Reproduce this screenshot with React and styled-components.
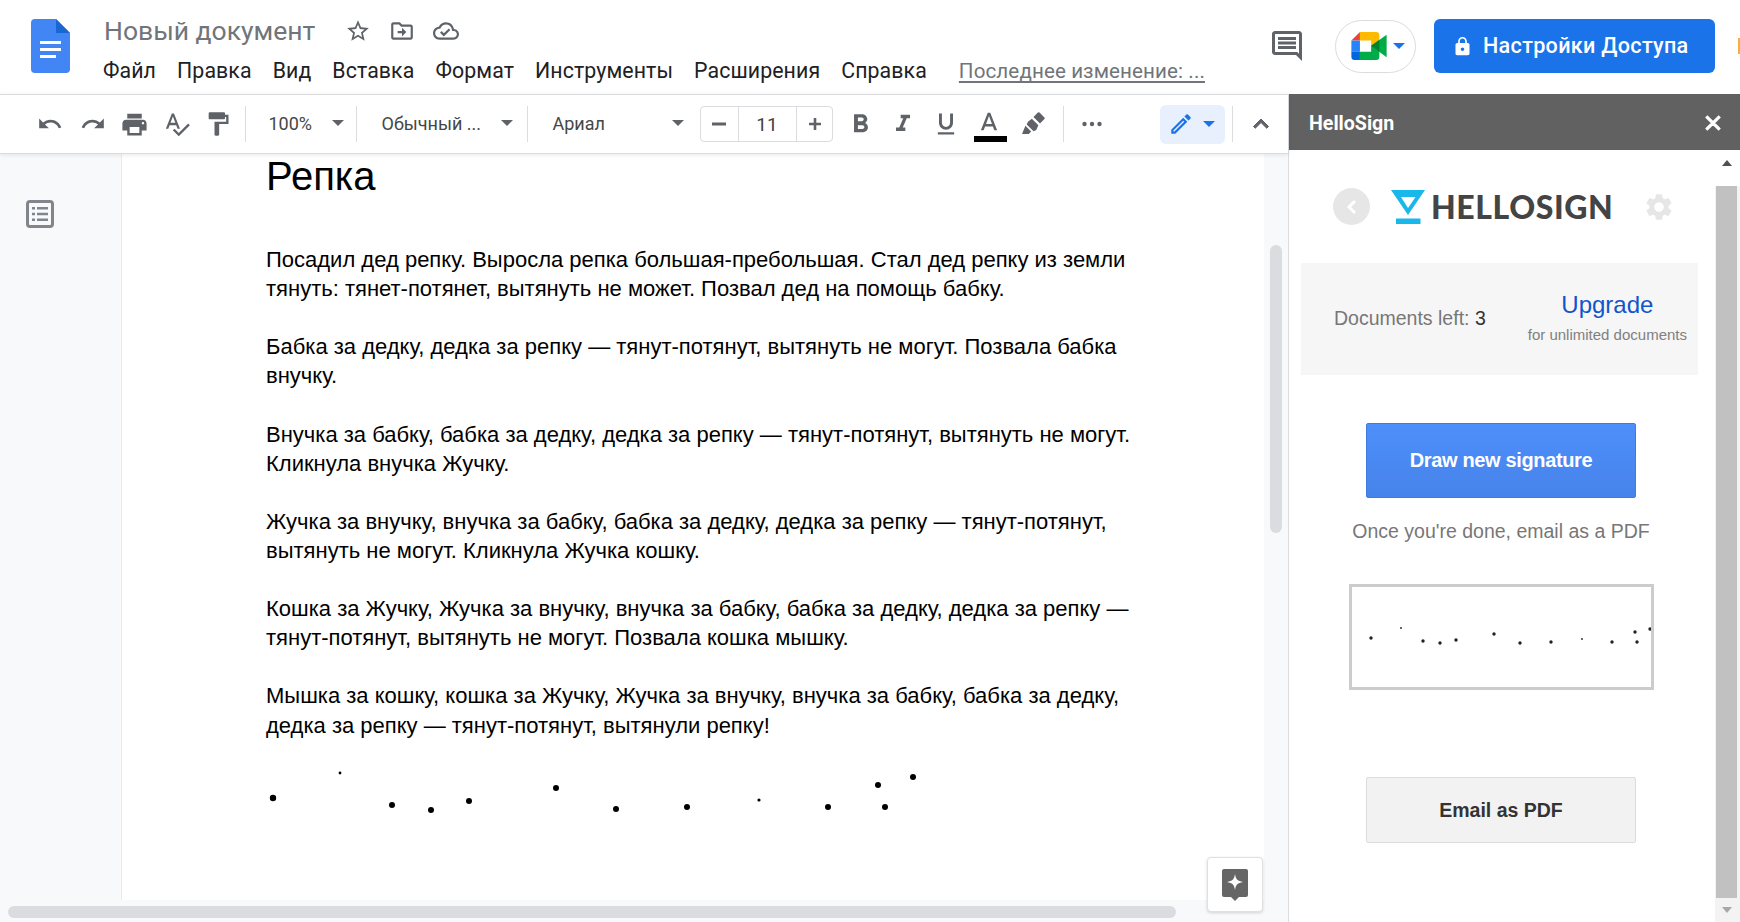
import React from "react";
import styled, { createGlobalStyle } from "styled-components";

const Global = createGlobalStyle`
  html, body { margin: 0; padding: 0; background: #fff; }
  #root { width: 1740px; height: 922px; overflow: hidden; }
  * { box-sizing: border-box; }
`;

const Shell = styled.div`
  width: 1740px; height: 922px; display: flex; flex-direction: column;
  font-family: Roboto, "Liberation Sans", sans-serif; color: #202124; overflow: hidden; background: #fff;
`;
const Header = styled.header`
  height: 94px; flex: none; display: flex; align-items: flex-start; position: relative;
`;
const DocsLogo = styled.svg`
  width: 39px; height: 54px; margin: 19px 0 0 31px; flex: none; display: block;
`;
const TitleBlock = styled.div`
  margin-left: 33px; width: 1130px; flex: none; display: flex; flex-direction: column;
`;
const TitleRow = styled.div`
  height: 30px; margin-top: 16px; display: flex; align-items: center;
`;
const DocTitle = styled.div`
  font-size: 26.5px; line-height: 30px; color: #70757a; margin-left: 1px; width: 241px; flex: none; white-space: nowrap;
`;
const TitleIcon = styled.svg`
  width: 26px; height: 26px; fill: #5f6368; margin-right: 18px; flex: none; display: block;
`;
const MenuRow = styled.nav`
  display: flex; margin-top: 12px; height: 26px; align-items: center;
`;
const MenuItem = styled.span`
  font-size: 21.3px; line-height: 26px; color: #202124; white-space: nowrap; letter-spacing: 0.1px; margin-right: ${p => p.$mr}px;
`;
const LastEdit = styled.span`
  font-size: 20.6px; line-height: 26px; color: #70757a; white-space: nowrap; text-decoration: underline; text-underline-offset: 3px; letter-spacing: 0.1px;
`;
const HeadRight = styled.div`
  display: flex; align-items: center; position: absolute; right: 0; top: 19px; height: 54px; padding-right: 25px;
`;
const CommentIcon = styled.svg`
  width: 36px; height: 36px; fill: #5f6368; margin-right: 30px; display: block;
`;
const MeetPill = styled.div`
  width: 81px; height: 53px; border: 1px solid #dadce0; border-radius: 27px; display: flex; align-items: center; padding-left: 15px; gap: 6px; margin-right: 18px;
`;
const MeetIcon = styled.svg` width: 36px; height: 28px; display: block; flex: none; `;
const Caret = styled.span`
  display: block; flex: none; width: 0; height: 0;
  border-left: ${p => p.$s || 6}px solid transparent; border-right: ${p => p.$s || 6}px solid transparent;
  border-top: ${p => p.$s || 6}px solid ${p => p.$c || "#5f6368"};
`;
const ShareBtn = styled.div`
  width: 281px; height: 54px; background: #1a73e8; border-radius: 6px; color: #fff; display: flex; align-items: center; padding: 0 0 2px 18px; gap: 10px;
  font-size: 21.6px; font-weight: 500; letter-spacing: 0.3px; white-space: nowrap;
`;
const LockIcon = styled.svg` width: 21px; height: 21px; fill: #fff; flex: none; display: block; margin-top: 2px; `;
const AvatarDot = styled.span`
  position: absolute; right: 0; top: 19px; width: 2px; height: 16px; background: #f4b03f;
`;

const Work = styled.div` flex: 1; min-height: 0; display: flex; `;
const LeftCol = styled.div` width: 1288px; flex: none; display: flex; flex-direction: column; position: relative; `;
const Toolbar = styled.div`
  height: 60px; flex: none; display: flex; align-items: center; padding-left: 29px; background: #fff;
  border-top: 1px solid #dadce0; border-bottom: 1px solid #dadce0; box-shadow: 0 1px 4px rgba(60,64,67,.12); position: relative; z-index: 2;
`;
const Tool = styled.div`
  width: ${p => p.$w}px; height: 40px; flex: none; display: flex; align-items: center; justify-content: center; margin-left: ${p => p.$ml || 0}px;
  svg { display: block; fill: #5f6368; }
`;
const Sep = styled.span`
  width: 1px; height: 36px; background: #dadce0; flex: none; margin-left: ${p => p.$ml || 0}px;
`;
const Drop = styled.div`
  width: ${p => p.$w}px; flex: none; display: flex; align-items: center; justify-content: space-between;
  padding: 0 ${p => p.$pr}px 2px ${p => p.$pl}px; font-size: 18px; color: #444746; white-space: nowrap;
`;
const SizeBox = styled.div`
  width: 133px; height: 36px; flex: none; display: grid; grid-template-columns: 37px 59px 37px;
  border: 1px solid #dadce0; border-radius: 4px; overflow: hidden;
`;
const SizeCell = styled.div`
  display: flex; align-items: center; justify-content: center; font-size: 19px; color: #444; padding-top: ${p => p.$line ? 1 : 0}px;
  border-left: ${p => p.$line ? "1px solid #dadce0" : "0"}; border-right: ${p => p.$line ? "1px solid #dadce0" : "0"};
  svg { fill: #5f6368; display: block; }
`;
const ColorTool = styled.div`
  width: 44.5px; height: 40px; flex: none; display: flex; flex-direction: column; align-items: center; justify-content: flex-start;
  svg { fill: #5f6368; display: block; margin-top: 5px; }
`;
const ColorBar = styled.span` width: 33px; height: 6px; background: #000; flex: none; margin: -3px 0 0 2px; display: block; `;
const ModeChip = styled.div`
  width: 65px; height: 39px; flex: none; margin-left: 40px; background: #e8f0fe; border-radius: 6px; display: flex; align-items: center; padding-left: 8px; gap: 9px;
  svg { fill: #1a73e8; display: block; flex: none; }
`;

const DocArea = styled.div` flex: 1; min-height: 0; display: flex; flex-direction: column; background: #f8f9fa; position: relative; `;
const DocRow = styled.div` height: 746px; flex: none; display: flex; `;
const Gutter = styled.div` width: 121px; flex: none; padding: 46px 0 0 25px; `;
const OutlineIcon = styled.svg` width: 30px; height: 28px; display: block; `;
const Page = styled.div`
  width: 1143px; flex: none; background: #fff; padding-left: 146px; overflow: hidden; border-left: 1px solid #e8eaed;
  font-family: "Liberation Sans", Arial, sans-serif; color: #000;
`;
const DocHeading = styled.h1`
  margin: 0 0 47px -2px; font-size: 40px; font-weight: 400; line-height: 44px; 
`;
const Para = styled.p`
  margin: 0 0 29.1px -2px; width: 872px; font-size: 22px; line-height: 29.1px;
`;
const DocSign = styled.svg` display: block; margin-top: 11px; width: 700px; height: 60px; `;
const Rail = styled.div` width: 24px; flex: none; padding: 91px 0 0 6px; `;
const RailThumb = styled.div` width: 12px; height: 288px; border-radius: 6px; background: #dadce0; `;
const HBarStrip = styled.div` flex: 1; padding: 6px 0 0 8px; `;
const HThumb = styled.div` width: 1168px; height: 12px; border-radius: 6px; background: #dadce0; `;
const AssistBtn = styled.div`
  position: absolute; right: 25px; bottom: 10px; width: 56px; height: 55px; background: #fff; border: 1px solid #e0e0e0; border-radius: 4px;
  box-shadow: 0 1px 3px rgba(60,64,67,.2); display: flex; align-items: center; justify-content: center;
`;
const AssistIcon = styled.svg` width: 28px; height: 34px; display: block; `;

const Panel = styled.aside`
  width: 452px; flex: none; border-left: 1px solid #dadce0; display: flex; flex-direction: column; background: #fff;
`;
const PanelHead = styled.div`
  height: 56px; flex: none; background: #616161; color: #fff; display: flex; align-items: center; justify-content: space-between; padding: 2px 15px 0 20px;
  font-size: 19.6px; font-weight: 700;
`;
const CloseIcon = styled.svg` width: 24px; height: 24px; fill: #fff; display: block; `;
const PanelBody = styled.div` flex: 1; min-height: 0; display: flex; `;
const PanelContent = styled.div`
  width: 426px; flex: none; display: flex; flex-direction: column; align-items: center; padding-right: 2px;
  font-family: "Liberation Sans", Arial, sans-serif;
`;
const LogoRow = styled.div`
  align-self: flex-start; margin: 38px 0 0 44px; height: 37px; display: flex; align-items: center;
`;
const BackCircle = styled.div`
  width: 37px; height: 37px; border-radius: 50%; background: #e6e6e6; display: flex; align-items: center; justify-content: center; margin-right: 21px; flex: none;
  svg { display: block; }
`;
const HsMark = styled.svg` width: 34px; height: 34px; display: block; flex: none; margin: 1px 6px 0 0; `;
const HsWord = styled.span`
  font-family: Lato, sans-serif; font-weight: 900; font-size: 32px; line-height: 37px; letter-spacing: 0.6px; color: #444; width: 182px; white-space: nowrap; flex: none;
`;
const GearIcon = styled.svg` width: 32px; height: 32px; fill: #e6e6e6; display: block; flex: none; margin-left: 30px; `;
const QuotaBox = styled.div`
  align-self: flex-start; margin: 38px 0 0 12px; width: 397px; height: 112px; background: #f6f6f6; display: flex; align-items: center; justify-content: space-between; padding: 0 11px 0 33px;
`;
const QuotaText = styled.div` font-size: 19.5px; line-height: 24px; margin-bottom: 2px; color: #777; white-space: nowrap; b { font-weight: 400; color: #333; } `;
const UpgradeCol = styled.div` display: flex; flex-direction: column; align-items: center; margin-bottom: 5px; `;
const UpgradeLink = styled.span` font-size: 24px; line-height: 30px; color: #1155cc; `;
const UpgradeNote = styled.span` font-size: 15px; line-height: 18px; color: #808080; margin-top: 6px; white-space: nowrap; `;
const DrawBtn = styled.div`
  margin-top: 48px; width: 270px; height: 75px; border-radius: 2px; background: linear-gradient(#4d8ffb, #4783ea); border: 1px solid #3f7bdd;
  color: #fff; font-weight: 700; font-size: 20px; letter-spacing: -0.35px; display: flex; align-items: center; justify-content: center;
`;
const Hint = styled.div` margin-top: 20px; font-size: 19.5px; line-height: 26px; color: #777; white-space: nowrap; `;
const SigBox = styled.div` margin-top: 40px; width: 305px; height: 106px; border: 3px solid #ccc; flex: none; `;
const SigDots = styled.svg` width: 299px; height: 100px; display: block; `;
const EmailBtn = styled.div`
  margin-top: 87px; width: 270px; height: 66px; border-radius: 2px; background: #f2f2f2; border: 1px solid #dcdcdc; color: #333;
  font-weight: 700; font-size: 19.5px; display: flex; align-items: center; justify-content: center;
`;
const PanelScroll = styled.div`
  width: 25px; flex: none; background: linear-gradient(#fff 36px, #f3f3f3 37px); display: flex; flex-direction: column; align-items: center; padding-right: 2px;
`;
const ScrollUp = styled.span`
  margin-top: 10px; width: 0; height: 0; border-left: 5.5px solid transparent; border-right: 5.5px solid transparent; border-bottom: 6px solid #505050; flex: none;
`;
const ScrollThumb = styled.div` margin-top: 20px; width: 21px; height: 712px; background: #c1c1c1; flex: none; `;
const ScrollDown = styled.span`
  margin-top: 9px; width: 0; height: 0; border-left: 5.5px solid transparent; border-right: 5.5px solid transparent; border-top: 6px solid #a8a8a8; flex: none;
`;

const I = {
  undo: "M12.5 8c-2.65 0-5.05.99-6.9 2.6L2 7v9h9l-3.62-3.62c1.39-1.16 3.16-1.88 5.12-1.88 3.54 0 6.55 2.31 7.6 5.5l2.37-.78C21.08 11.03 17.15 8 12.5 8z",
  redo: "M18.4 10.6C16.55 8.99 14.15 8 11.5 8c-4.65 0-8.58 3.03-9.96 7.22L3.9 16c1.05-3.19 4.05-5.5 7.6-5.5 1.95 0 3.73.72 5.12 1.88L13 16h9V7l-3.6 3.6z",
  print: "M19 8H5c-1.66 0-3 1.34-3 3v6h4v4h12v-4h4v-6c0-1.66-1.34-3-3-3zm-3 11H8v-5h8v5zm3-7c-.55 0-1-.45-1-1s.45-1 1-1 1 .45 1 1-.45 1-1 1zm-1-9H6v4h12V3z",
  spell: "M12.45 16h2.09L9.43 3H7.57L2.46 16h2.09l1.12-3h5.64l1.14 3zm-6.02-5L8.5 5.48 10.57 11H6.43zm15.16.59l-8.09 8.09L9.83 16l-1.41 1.41 5.09 5.09L23 13l-1.41-1.41z",
  paint: "M18 4V3c0-.55-.45-1-1-1H5c-.55 0-1 .45-1 1v4c0 .55.45 1 1 1h12c.55 0 1-.45 1-1V6h1v4H9v11c0 .55.45 1 1 1h2c.55 0 1-.45 1-1v-9h8V4h-3z",
  bold: "M15.6 10.79c.97-.67 1.65-1.77 1.65-2.79 0-2.26-1.75-4-4-4H7v14h7.04c2.09 0 3.71-1.7 3.71-3.79 0-1.52-.86-2.82-2.15-3.42zM10 6.5h3c.83 0 1.5.67 1.5 1.5s-.67 1.5-1.5 1.5h-3v-3zm3.5 9H10v-3h3.5c.83 0 1.5.67 1.5 1.5s-.67 1.5-1.5 1.5z",
  italic: "M10 4v3h2.21l-3.42 8H6v3h8v-3h-2.21l3.42-8H18V4z",
  under: "M12 17c3.31 0 6-2.69 6-6V3h-2.5v8c0 1.93-1.57 3.5-3.5 3.5S8.5 12.93 8.5 11V3H6v8c0 3.31 2.69 6 6 6zm-7 2v2h14v-2H5z",
  colorA: "M11 3L5.5 17h2.25l1.12-3h6.25l1.12 3h2.25L13 3h-2zm-1.38 9L12 5.67 14.38 12H9.62z",
  pencil: "M3 17.25V21h3.75L17.81 9.94l-3.75-3.75L3 17.25zM5.92 19H5v-.92l9.06-9.06.92.92L5.92 19zM20.71 5.63l-2.34-2.34c-.2-.2-.45-.29-.71-.29s-.51.1-.7.29l-1.83 1.83 3.75 3.75 1.83-1.83c.39-.39.39-1.02 0-1.41z",
  chevUp: "M7.41 15.41L12 10.83l4.59 4.58L18 14l-6-6-6 6z",
  star: "M22 9.24l-7.19-.62L12 2 9.19 8.63 2 9.24l5.46 4.73L5.82 21 12 17.27 18.18 21l-1.63-7.03L22 9.24zM12 15.4l-3.76 2.27 1-4.28-3.32-2.88 4.38-.38L12 6.1l1.71 4.04 4.38.38-3.32 2.88 1 4.28L12 15.4z",
  move: "M20 6h-8l-2-2H4c-1.1 0-1.99.9-1.99 2L2 18c0 1.1.9 2 2 2h16c1.1 0 2-.9 2-2V8c0-1.1-.9-2-2-2zm0 12H4V6h5.17l2 2H20v10zm-8-4H8v-2h4V9l4 4-4 4v-3z",
  cloud: "M19.35 10.04C18.67 6.59 15.64 4 12 4 9.11 4 6.6 5.64 5.35 8.04 2.34 8.36 0 10.91 0 14c0 3.31 2.69 6 6 6h13c2.76 0 5-2.24 5-5 0-2.64-2.05-4.78-4.65-4.96zM19 18H6c-2.21 0-4-1.79-4-4 0-2.05 1.53-3.76 3.56-3.97l1.07-.11.5-.95C8.08 7.14 9.94 6 12 6c2.62 0 4.88 1.86 5.39 4.43l.3 1.5 1.53.11c1.56.1 2.78 1.41 2.78 2.96 0 1.65-1.35 3-3 3zm-9-3.82l-2.09-2.09L6.5 13.5 10 17l6.01-6.01-1.41-1.41z",
  comment: "M21.99 4c0-1.1-.89-2-1.99-2H4c-1.1 0-2 .9-2 2v12c0 1.1.9 2 2 2h14l4 4-.01-18zM20 4v13.17L18.83 16H4V4h16zM6 12h12v2H6zm0-3h12v2H6zm0-3h12v2H6z",
  lock: "M18 8h-1V6c0-2.76-2.24-5-5-5S7 3.24 7 6v2H6c-1.1 0-2 .9-2 2v10c0 1.1.9 2 2 2h12c1.1 0 2-.9 2-2V10c0-1.1-.9-2-2-2zm-6 9c-1.1 0-2-.9-2-2s.9-2 2-2 2 .9 2 2-.9 2-2 2zm3.1-9H8.9V6c0-1.71 1.39-3.1 3.1-3.1 1.71 0 3.1 1.39 3.1 3.1v2z",
  close: "M19 6.41L17.59 5 12 10.59 6.41 5 5 6.41 10.59 12 5 17.59 6.41 19 12 13.41 17.59 19 19 17.59 13.41 12z",
  gear: "M19.14 12.94c.04-.3.06-.61.06-.94 0-.32-.02-.64-.07-.94l2.03-1.58c.18-.14.23-.41.12-.61l-1.92-3.32c-.12-.22-.37-.29-.59-.22l-2.39.96c-.5-.38-1.03-.7-1.62-.94l-.36-2.54c-.04-.24-.24-.41-.48-.41h-3.84c-.24 0-.43.17-.47.41l-.36 2.54c-.59.24-1.13.57-1.62.94l-2.39-.96c-.22-.08-.47 0-.59.22L2.74 8.87c-.12.21-.08.47.12.61l2.03 1.58c-.05.3-.09.63-.09.94s.02.64.07.94l-2.03 1.58c-.18.14-.23.41-.12.61l1.92 3.32c.12.22.37.29.59.22l2.39-.96c.5.38 1.03.7 1.62.94l.36 2.54c.05.24.24.41.48.41h3.84c.24 0 .44-.17.47-.41l.36-2.54c.59-.24 1.13-.56 1.62-.94l2.39.96c.22.08.47 0 .59-.22l1.92-3.32c.12-.22.07-.47-.12-.61l-2.01-1.58zM12 15.6c-1.98 0-3.6-1.62-3.6-3.6s1.62-3.6 3.6-3.6 3.6 1.62 3.6 3.6-1.62 3.6-3.6 3.6z",
};

const Ico = ({ d, s = 26, sw }) => (
  <svg width={s} height={s} viewBox="0 0 24 24" strokeWidth={sw} stroke={sw ? "#5f6368" : undefined}><path d={d} /></svg>
);

const paragraphs = [
  "Посадил дед репку. Выросла репка большая-пребольшая. Стал дед репку из земли тянуть: тянет-потянет, вытянуть не может. Позвал дед на помощь бабку.",
  "Бабка за дедку, дедка за репку — тянут-потянут, вытянуть не могут. Позвала бабка внучку.",
  "Внучка за бабку, бабка за дедку, дедка за репку — тянут-потянут, вытянуть не могут. Кликнула внучка Жучку.",
  "Жучка за внучку, внучка за бабку, бабка за дедку, дедка за репку — тянут-потянут, вытянуть не могут. Кликнула Жучка кошку.",
  "Кошка за Жучку, Жучка за внучку, внучка за бабку, бабка за дедку, дедка за репку — тянут-потянут, вытянуть не могут. Позвала кошка мышку.",
  "Мышка за кошку, кошка за Жучку, Жучка за внучку, внучка за бабку, бабка за дедку, дедка за репку — тянут-потянут, вытянули репку!",
];

const docDots = [[272,799,3.2],[339,774,1.4],[391,806,3],[430,811,3],[468,802,3],[555,789,3],[615,810,3],[686,808,3],[758,801,1.6],[827,808,3],[877,786,3],[884,808,3],[912,778,3]];
const sigDots = [[1371,638,1.7],[1401,628,.9],[1423,641,1.7],[1440,643,1.7],[1456,640,1.7],[1494,634,1.7],[1520,643,1.7],[1551,642,1.7],[1582,639,.9],[1612,642,1.7],[1635,632,1.7],[1637,642,1.7],[1650,629,1.7]];

const menu = [["Файл",21],["Правка",21],["Вид",21],["Вставка",21],["Формат",21],["Инструменты",21],["Расширения",21],["Справка",32]];

export default function App() {
  return (
    <Shell>
      <Global />
      <Header>
        <DocsLogo viewBox="0 0 39 54">
          <path d="M4 0h21l14 14v36a4 4 0 0 1-4 4H4a4 4 0 0 1-4-4V4a4 4 0 0 1 4-4z" fill="#4285f4" />
          <path d="M25 0l14 14H25z" fill="#1967d2" />
          <path d="M9 22h21v3H9zM9 29h21v3H9zM9 36h16v3H9z" fill="#fff" />
        </DocsLogo>
        <TitleBlock>
          <TitleRow>
            <DocTitle>Новый документ</DocTitle>
            <TitleIcon viewBox="0 0 24 24"><path d={I.star} /></TitleIcon>
            <TitleIcon viewBox="0 0 24 24"><path d={I.move} /></TitleIcon>
            <TitleIcon viewBox="0 0 24 24"><path d={I.cloud} /></TitleIcon>
          </TitleRow>
          <MenuRow>
            {menu.map(([t, m]) => <MenuItem key={t} $mr={m}>{t}</MenuItem>)}
            <LastEdit>Последнее изменение: ...</LastEdit>
          </MenuRow>
        </TitleBlock>
        <HeadRight>
          <CommentIcon viewBox="0 0 24 24"><path d={I.comment} /></CommentIcon>
          <MeetPill>
            <MeetIcon viewBox="0 0 107 85">
              <path d="M26 0L0 26h26z" fill="#ea4335" />
              <path d="M26 0h49a10 10 0 0 1 10 10v32H60V26H26z" fill="#ffba00" />
              <path d="M0 26h26v34H0z" fill="#2684fc" />
              <path d="M0 60h26v25H10A10 10 0 0 1 0 75z" fill="#0066da" />
              <path d="M26 60h34V42h25v33a10 10 0 0 1-10 10H26z" fill="#00ac47" />
              <path d="M60 42L107 8v69z" fill="#00ac47" />
              <path d="M60 42l25-18v36z" fill="#00832d" />
            </MeetIcon>
            <Caret $c="#1a73e8" />
          </MeetPill>
          <ShareBtn>
            <LockIcon viewBox="0 0 24 24"><path d={I.lock} /></LockIcon>
            Настройки Доступа
          </ShareBtn>
          <AvatarDot />
        </HeadRight>
      </Header>
      <Work>
        <LeftCol>
          <Toolbar>
            <Tool $w={42.5}><Ico d={I.undo} /></Tool>
            <Tool $w={42.5}><Ico d={I.redo} /></Tool>
            <Tool $w={41.5}><Ico d={I.print} s={29} /></Tool>
            <Tool $w={42.5}><Ico d={I.spell} s={28} /></Tool>
            <Tool $w={40.5}><Ico d={I.paint} s={28} /></Tool>
            <Sep $ml={6} />
            <Drop $w={110} $pl={23} $pr={12}>100%<Caret /></Drop>
            <Sep />
            <Drop $w={170} $pl={25} $pr={14}>Обычный ...<Caret /></Drop>
            <Sep />
            <Drop $w={172} $pl={25} $pr={16}>Ариал<Caret /></Drop>
            <SizeBox>
              <SizeCell><svg width="20" height="20" viewBox="0 0 20 20"><path d="M3 8.500h14v3H3z" /></svg></SizeCell>
              <SizeCell $line>11</SizeCell>
              <SizeCell><svg width="20" height="20" viewBox="0 0 20 20"><path d="M4 8.700h12v2.600H4z" /><path d="M8.700 4h2.600v12H8.700z" /></svg></SizeCell>
            </SizeBox>
            <Tool $w={43.5} $ml={6}><Ico d={I.bold} s={31} /></Tool>
            <Tool $w={42.5}><Ico d={I.italic} s={28} /></Tool>
            <Tool $w={42.5}><Ico d={I.under} s={28} /></Tool>
            <ColorTool>
              <svg width="30" height="30" viewBox="0 0 24 24"><path d={I.colorA} /></svg>
              <ColorBar />
            </ColorTool>
            <Tool $w={43.5}>
              <svg width="28" height="28" viewBox="0 0 24 24"><path d="M17.6 2.200l4.200 4.200a1 1 0 0 1 0 1.400L18 11.600 12.400 6l3.800-3.800a1 1 0 0 1 1.400 0zM11 7.400l5.600 5.600-1.800 4.200-2.300 1.100-5.900-5.900 1.100-2.300zM5.500 13.600l4.900 4.900-2 2H2.600z" /></svg>
            </Tool>
            <Sep $ml={8} />
            <Tool $w={56}>
              <svg width="24" height="24" viewBox="0 0 24 24"><circle cx="4.500" cy="12" r="2.200" /><circle cx="12" cy="12" r="2.200" /><circle cx="19.500" cy="12" r="2.200" /></svg>
            </Tool>
            <ModeChip>
              <svg width="26" height="26" viewBox="0 0 24 24"><path d={I.pencil} /></svg>
              <Caret $c="#1a73e8" />
            </ModeChip>
            <Sep $ml={7} />
            <Tool $w={55}><Ico d={I.chevUp} s={30} sw={0.8} /></Tool>
          </Toolbar>
          <DocArea>
            <DocRow>
              <Gutter>
                <OutlineIcon viewBox="0 0 30 28">
                  <rect x="2.500" y="1.500" width="25" height="25" rx="2.500" fill="none" stroke="#80868b" strokeWidth="3" />
                  <path d="M7 7h3v2.500H7zM12 7h11v2.500H12zM7 12.700h3v2.500H7zM12 12.700h11v2.500H12zM7 18.400h3v2.500H7zM12 18.400h11v2.500H12z" fill="#80868b" />
                </OutlineIcon>
              </Gutter>
              <Page>
                <DocHeading>Репка</DocHeading>
                {paragraphs.map(t => <Para key={t}>{t}</Para>)}
                <DocSign viewBox="267 770 700 60">
                  {docDots.map(([x, y, r]) => <circle key={x} cx={x} cy={y} r={r} fill="#000" />)}
                </DocSign>
              </Page>
              <Rail><RailThumb /></Rail>
            </DocRow>
            <HBarStrip><HThumb /></HBarStrip>
            <AssistBtn>
              <AssistIcon viewBox="0 0 28 34">
                <path d="M3 1h22a2 2 0 0 1 2 2v24a2 2 0 0 1-2 2h-7l-4 4-4-4H3a2 2 0 0 1-2-2V3a2 2 0 0 1 2-2z" fill="#666" />
                <path d="M14 6c1 5.500 2.500 7 8 8-5.500 1-7 2.500-8 8-1-5.500-2.500-7-8-8 5.500-1 7-2.500 8-8z" fill="#fff" />
              </AssistIcon>
            </AssistBtn>
          </DocArea>
        </LeftCol>
        <Panel>
          <PanelHead>
            HelloSign
            <CloseIcon viewBox="0 0 24 24"><path d={I.close} stroke="#fff" strokeWidth="1.2" /></CloseIcon>
          </PanelHead>
          <PanelBody>
            <PanelContent>
              <LogoRow>
                <BackCircle>
                  <svg width="14" height="18" viewBox="0 0 14 18"><path d="M10 3L4 9l6 6" fill="none" stroke="#fff" strokeWidth="3" /></svg>
                </BackCircle>
                <HsMark viewBox="0 0 34 34">
                  <path fillRule="evenodd" d="M0 0h34L17 25zM10 7l7 11 7.500-11z" fill="#1ab7ea" />
                  <path d="M5 28.500h24.500V34H5z" fill="#1ab7ea" />
                </HsMark>
                <HsWord>HELLOSIGN</HsWord>
                <GearIcon viewBox="0 0 24 24"><path d={I.gear} /></GearIcon>
              </LogoRow>
              <QuotaBox>
                <QuotaText>Documents left: <b>3</b></QuotaText>
                <UpgradeCol>
                  <UpgradeLink>Upgrade</UpgradeLink>
                  <UpgradeNote>for unlimited documents</UpgradeNote>
                </UpgradeCol>
              </QuotaBox>
              <DrawBtn>Draw new signature</DrawBtn>
              <Hint>Once you're done, email as a PDF</Hint>
              <SigBox>
                <SigDots viewBox="1352 587 299 100">
                  {sigDots.map(([x, y, r]) => <circle key={x} cx={x} cy={y} r={r} fill="#222" />)}
                </SigDots>
              </SigBox>
              <EmailBtn>Email as PDF</EmailBtn>
            </PanelContent>
            <PanelScroll>
              <ScrollUp />
              <ScrollThumb />
              <ScrollDown />
            </PanelScroll>
          </PanelBody>
        </Panel>
      </Work>
    </Shell>
  );
}
